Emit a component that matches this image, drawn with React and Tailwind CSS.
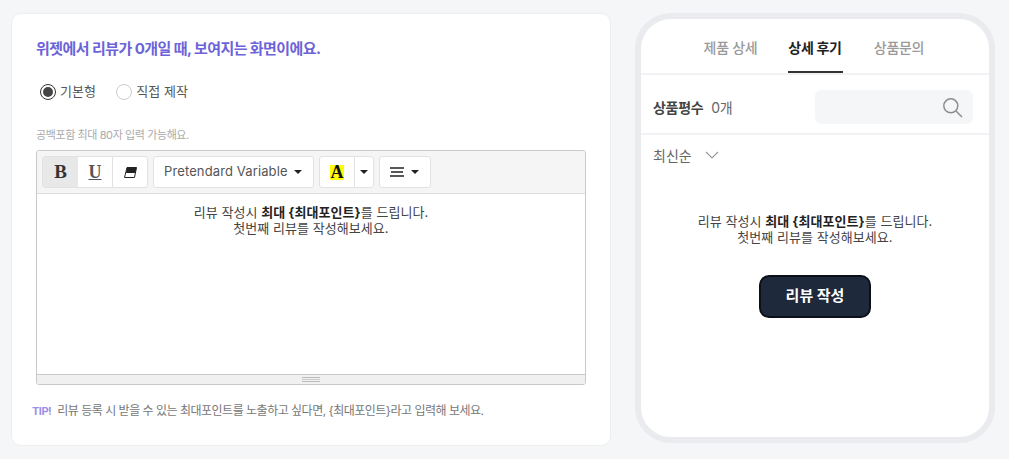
import React from "react";

function Caret() {
  return <span className="w-0 h-0 border-x-[4px] border-x-transparent border-t-[4px] border-t-[#222]" />;
}

function Body({ className = "" }) {
  return (
    <div className={"text-center text-[13px] leading-[16px] tracking-[0.05px] text-[#444] " + className}>
      <p>리뷰 작성시 <b className="font-bold text-[#222]">최대 {"{최대포인트}"}</b>를 드립니다.</p>
      <p>첫번째 리뷰를 작성해보세요.</p>
    </div>
  );
}

export default function App() {
  return (
    <div className="w-[1009px] h-[459px] overflow-hidden bg-[#f5f6f8] flex items-start pt-[13px] pl-[11px] gap-[24px] font-['Inter','Noto_Sans_CJK_KR',sans-serif]">
      <section className="w-[600px] h-[433px] bg-white rounded-[10px] border border-[#eceef0] px-[24px] flex flex-col">
        <h2 className="mt-[25px] text-[15px] leading-[20px] font-bold tracking-[-0.56px] text-[#6c63d9]">
          위젯에서 리뷰가 0개일 때, 보여지는 화면이에요.
        </h2>
        <div className="mt-[23px] ml-[4px] flex items-center h-[20px] text-[13px] tracking-[0.1px] text-[#555]">
          <span className="w-[16px] h-[16px] rounded-full border border-[#333] flex items-center justify-center">
            <span className="w-[10px] h-[10px] rounded-full bg-[#444]" />
          </span>
          <span className="ml-[4px]">기본형</span>
          <span className="ml-[20px] w-[16px] h-[16px] rounded-full border border-[#ccc]" />
          <span className="ml-[4px]">직접 제작</span>
        </div>
        <p className="mt-[25px] text-[11px] leading-[16px] tracking-[-0.4px] text-[#aaa]">공백포함 최대 80자 입력 가능해요.</p>
        <div className="mt-[7px] w-[550px] h-[235px] border border-[#c9c9c9] rounded-[3px] flex flex-col overflow-hidden">
          <div className="h-[43px] shrink-0 bg-[#f5f5f5] border-b border-[#ddd] flex items-center px-[5px] gap-[5px]">
            <div className="flex h-[32px] border border-[#e2e2e2] rounded-[3px] bg-white overflow-hidden">
              <span className="w-[35px] bg-[#e8e8e8] flex items-center justify-center font-['Liberation_Serif',serif] font-bold text-[19px] text-[#333]">B</span>
              <span className="w-[35px] border-r border-[#e2e2e2] flex items-center justify-center font-['Liberation_Serif',serif] font-bold text-[18px] underline text-[#555]">U</span>
              <span className="w-[34px] flex items-center justify-center">
                <svg width="13" height="11" viewBox="0 0 13 11">
                  <path d="M3 0.5h9.5L10.5 10.5H0.5Z" fill="#fff" stroke="#222" />
                  <path d="M3 0.5h9.5L11.4 6H2Z" fill="#222" />
                </svg>
              </span>
            </div>
            <div className="w-[161px] h-[32px] border border-[#e2e2e2] rounded-[3px] bg-white flex items-center justify-between pl-[10px] pr-[11px] text-[13px] text-[#555]">
              <span className="tracking-[0.12px] whitespace-nowrap">Pretendard Variable</span>
              <Caret />
            </div>
            <div className="flex h-[32px] border border-[#e2e2e2] rounded-[3px] bg-white">
              <span className="w-[35px] border-r border-[#e2e2e2] flex items-center justify-center">
                <span className="w-[14px] h-[15px] bg-[#ffff00] flex items-center justify-center font-['Liberation_Serif',serif] font-bold text-[18px] leading-none text-[#111]">A</span>
              </span>
              <span className="w-[18px] flex items-center justify-center"><Caret /></span>
            </div>
            <div className="w-[52px] h-[32px] border border-[#e2e2e2] rounded-[3px] bg-white flex items-center pl-[10px] gap-[7px]">
              <svg width="14" height="10" viewBox="0 0 14 10">
                <path d="M0 1h14M1 5h12M0 9h14" stroke="#222" strokeWidth="1.5" />
              </svg>
              <Caret />
            </div>
          </div>
          <div className="flex-1 bg-white pt-[10px]">
            <Body />
          </div>
          <div className="h-[10px] shrink-0 bg-[#f0f0f0] border-t border-[#c9c9c9] flex items-center justify-center">
            <span className="w-[18px] h-[5px] border-y border-[#bbb] flex items-center"><span className="w-full h-px bg-[#ccc]" /></span>
          </div>
        </div>
        <p className="mt-[18px] -ml-[4px] text-[12px] leading-[16px] tracking-[-0.5px] text-[#777] whitespace-nowrap">
          <b className="font-bold text-[11px] text-[#9d8fe8] mr-[6px]">TIP!</b>
          리뷰 등록 시 받을 수 있는 최대포인트를 노출하고 싶다면, {"{최대포인트}"}라고 입력해 보세요.
        </p>
      </section>

      <section className="w-[360px] h-[430px] bg-white border-[6px] border-[#e9ebee] rounded-[36px] overflow-hidden flex flex-col">
        <div className="h-[56px] shrink-0 flex justify-center pr-[2px] border-b-2 border-[#f1f2f3] text-[14px] font-medium tracking-[-0.3px]">
          <span className="w-[54px] mr-[30px] pt-[19px] leading-[20px] text-center text-[#999] whitespace-nowrap">제품 상세</span>
          <span className="w-[55px] mr-[31px] pt-[19px] leading-[20px] text-center text-[#222] font-bold whitespace-nowrap h-[54px] border-b-2 border-[#333]">상세 후기</span>
          <span className="w-[51px] pt-[19px] leading-[20px] text-center text-[#999] whitespace-nowrap">상품문의</span>
        </div>
        <div className="h-[60px] shrink-0 flex items-center justify-between pl-[12px] pr-[16px] pt-[6px] border-b-2 border-[#f1f2f3]">
          <div className="flex items-center text-[14px] tracking-[-0.3px]">
            <b className="font-bold text-[#444]">상품평수</b>
            <span className="ml-[8px] text-[#666]">0개</span>
          </div>
          <div className="w-[158px] h-[34px] rounded-[6px] bg-[#f5f6f8] flex items-center justify-end pr-[10px]">
            <svg width="21" height="21" viewBox="0 0 21 21" fill="none" stroke="#8d8d8d" strokeWidth="1.5">
              <circle cx="8.8" cy="8.8" r="7" />
              <path d="M14 14l6 6" />
            </svg>
          </div>
        </div>
        <div className="mt-[10px] pl-[12px] flex items-center h-[20px] text-[14px] text-[#666]">
          최신순
          <svg className="ml-[13px]" width="14" height="8" viewBox="0 0 14 8" fill="none" stroke="#999" strokeWidth="1.1">
            <path d="M1 1l6 6 6-6" />
          </svg>
        </div>
        <Body className="mt-[48px]" />
        <button className="mt-[30px] self-center w-[112px] h-[43px] rounded-[10px] bg-[#1e293b] border-2 border-[#0b0f17] text-white text-[15px] font-bold">
          리뷰 작성
        </button>
      </section>
    </div>
  );
}
